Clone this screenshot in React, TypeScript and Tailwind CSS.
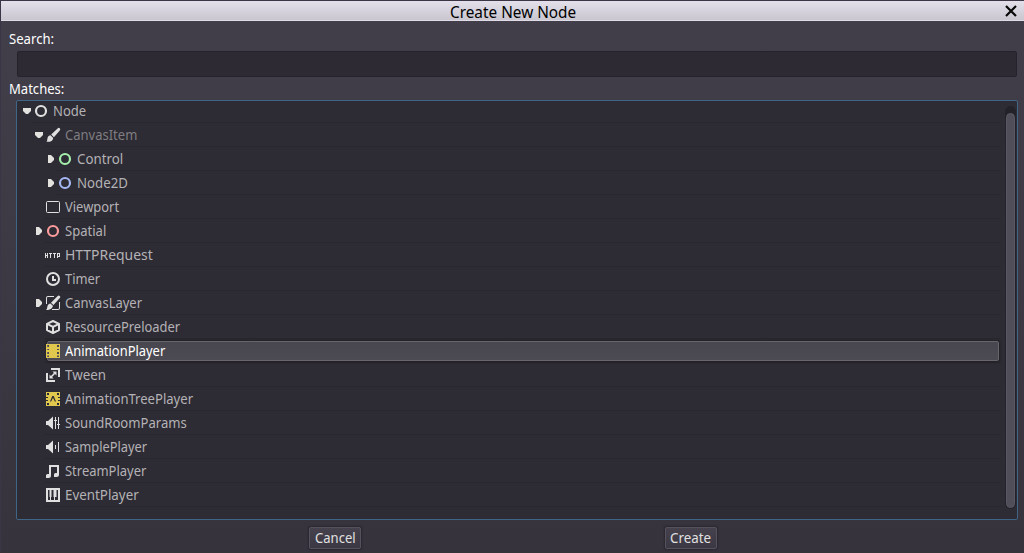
import React from "react";

type IconName =
  | "node" | "brush" | "viewport" | "http" | "timer" | "layer" | "box"
  | "film" | "tween" | "tree" | "room" | "sample" | "stream" | "piano";

type Item = {
  label: string;
  depth: 0 | 1 | 2;
  icon: IconName;
  color?: string;
  arrow?: "down" | "right";
  width: number;
  dim?: boolean;
  selected?: boolean;
};

const items: Item[] = [
  { label: "Node", depth: 0, icon: "node", arrow: "down", width: 33.5 },
  { label: "CanvasItem", depth: 1, icon: "brush", arrow: "down", dim: true, width: 72.5 },
  { label: "Control", depth: 2, icon: "node", color: "#a5efac", arrow: "right", width: 46.5 },
  { label: "Node2D", depth: 2, icon: "node", color: "#a5b7f3", arrow: "right", width: 51 },
  { label: "Viewport", depth: 1, icon: "viewport", width: 54.5 },
  { label: "Spatial", depth: 1, icon: "node", color: "#fc9c9c", arrow: "right", width: 41 },
  { label: "HTTPRequest", depth: 1, icon: "http", width: 87.5 },
  { label: "Timer", depth: 1, icon: "timer", width: 35 },
  { label: "CanvasLayer", depth: 1, icon: "layer", arrow: "right", width: 77 },
  { label: "ResourcePreloader", depth: 1, icon: "box", width: 115.5 },
  { label: "AnimationPlayer", depth: 1, icon: "film", selected: true, width: 100.5 },
  { label: "Tween", depth: 1, icon: "tween", width: 41 },
  { label: "AnimationTreePlayer", depth: 1, icon: "tree", width: 128 },
  { label: "SoundRoomParams", depth: 1, icon: "room", width: 121.5 },
  { label: "SamplePlayer", depth: 1, icon: "sample", width: 82.5 },
  { label: "StreamPlayer", depth: 1, icon: "stream", width: 81.5 },
  { label: "EventPlayer", depth: 1, icon: "piano", width: 73.5 },
];

/* One line of text, condensed horizontally to the given width. */
function Label({ text, width, className = "" }: { text: string; width: number; className?: string }) {
  const ref = React.useRef<HTMLSpanElement>(null);
  const [natural, setNatural] = React.useState(width);
  React.useLayoutEffect(() => {
    if (ref.current) setNatural(ref.current.offsetWidth);
  }, [text]);
  return (
    <span
      ref={ref}
      className={`inline-block origin-left whitespace-nowrap ${className}`}
      style={{ transform: `scaleX(${width / natural})`, marginRight: width - natural }}
    >
      {text}
    </span>
  );
}

function Icon({ name, color = "#e0e0e0" }: { name: IconName; color?: string }) {
  const shapes: Record<IconName, React.ReactNode> = {
    node: <circle cx="8" cy="8" r="5" fill="none" stroke={color} strokeWidth="2.2" />,
    brush: (
      <g fill={color}>
        <path d="M12.6 1.4a1.5 1.5 0 0 1 2.2 2.1L8.9 10.2 6.2 7.6z" />
        <path d="M5.5 8.3 8.2 10.9c-.2 3-3 4.2-6.8 3.8 1.2-.8.5-2.2 1.3-4.3.5-1.2 1.4-2 2.8-2.1z" />
      </g>
    ),
    viewport: <rect x="1.5" y="2.5" width="13" height="11" rx="1" fill="none" stroke={color} />,
    http: (
      <path
        fill={color}
        fillRule="evenodd"
        d="M0 6h1v2h1V6h1v5H2V9H1v2H0zM4 6h3v1H6v4H5V7H4zM8 6h3v1h-1v4H9V7H8zM12 6h3v4h-2v1h-1zM13 7v2h1V7z"
      />
    ),
    timer: (
      <g fill="none" stroke={color}>
        <circle cx="8" cy="8" r="6" strokeWidth="2" />
        <path d="M8 5v4h3" strokeWidth="2" />
      </g>
    ),
    layer: (
      <g fill={color}>
        <path d="M3 1h6v1H3a1 1 0 0 0-1 1v6H1V3a2 2 0 0 1 2-2zM14 7h1v6a2 2 0 0 1-2 2H7v-1h6a1 1 0 0 0 1-1z" />
        <path d="M12.7 1a1.4 1.4 0 0 1 2.1 2L8.5 10 6 7.7z" />
        <path d="M5.4 8.4 7.9 10.8c-.3 2.9-3.1 4.4-6.9 4.2 1.4-1 .9-2.5 1.7-4.5.5-1.2 1.4-2 2.7-2.1z" />
      </g>
    ),
    box: (
      <g fill="none" stroke={color} strokeWidth="2" strokeLinejoin="round">
        <path d="M8 2 14 4.8v6.3L8 14l-6-2.9V4.8z" />
        <path d="M2 4.8 8 7.8l6-3M8 7.8V14" />
      </g>
    ),
    film: (
      <path
        fill="#e0c84f"
        fillRule="evenodd"
        d="M1 1h14v14H1zM2 2v2h2V2zM2 6v1h2V6zM2 9v2h2V9zM2 12.5v1.5h2v-1.5zM12 2v2h2V2zM12 6v1h2V6zM12 9v2h2V9zM12 12.5v1.5h2v-1.5z"
      />
    ),
    tween: (
      <g fill={color}>
        <path d="M6 1h9v9h-2V3H6zM1 6h2v7h7v2H1z" />
        <path d="M7.5 4.5h4v4L10 7.1 7.1 10l1.4 1.5h-4v-4L5.9 8.9 8.9 5.9z" />
      </g>
    ),
    tree: (
      <path
        fill="#e0c84f"
        fillRule="evenodd"
        d="M1 1h14v14H1zM2 2v2h2V2zM1 6v1h2V6zM1 9v1h2V9zM2 12v2h2v-2zM12 2v2h2V2zM13 6v1h2V6zM13 9v1h2V9zM12 12v2h2v-2zM7.3 5 5 10.5h1.2L8 6.8l1.8 3.7H11L8.7 5z"
      />
    ),
    room: (
      <path
        fill={color}
        d="M1 6h2l5-4.5v13L3 10H1zM10 2h1v3h1v1h-1v8h-1V6H9V5h1zM13 2h1v7h1v1h-1v4h-1v-4h-1V9h1z"
      />
    ),
    sample: <path fill={color} d="M1 6h2l5-4.5v13L3 10H1zM10 6h1v4h-1zM13 3h1v10h-1z" />,
    stream: (
      <path
        fill={color}
        d="M4 2h10v9.5a2.5 2.5 0 0 1-2.5 2.5H9v-2.5A1.5 1.5 0 0 1 10.5 10H12V4H6v8.5A2.5 2.5 0 0 1 3.5 15H1v-2.5A1.5 1.5 0 0 1 2.5 11H4z"
      />
    ),
    piano: (
      <path
        fill={color}
        fillRule="evenodd"
        d="M1 1h14v14H1zM3 3v10h2v-3H4.5V3zM6.5 3v7H6v3h3v-3h-.5V3zM11.5 3v7H10v3h3V3z"
      />
    ),
  };
  return (
    <svg className="relative h-4 w-4 shrink-0" viewBox="0 0 16 16">
      {shapes[name]}
    </svg>
  );
}

function Arrow({ dir }: { dir?: "down" | "right" }) {
  return (
    <svg className="h-3 w-3 shrink-0" viewBox="0 0 12 12" fill="#e4e2df">
      {dir === "down" && <path d="M2 3h8v3L7 9H5L2 6z" />}
      {dir === "right" && <path d="M3 2h3l3 3v2l-3 3H3z" />}
    </svg>
  );
}

const indent = ["ml-1", "ml-4", "ml-7"];

function Row({ item }: { item: Item }) {
  const tone = item.selected ? "text-white" : item.dim ? "text-[#7f7d82]" : "text-[#b4b2b6]";
  return (
    <div className={`flex h-6 ${indent[item.depth]}`}>
      <div className="flex w-3 items-center">
        <Arrow dir={item.arrow} />
      </div>
      <div className="flex flex-1 items-center border-b border-[#29272b] pt-px">
        <Icon name={item.icon} color={item.color} />
        <div
          className={
            item.selected
              ? "-ml-[14px] mr-0.5 flex h-5 flex-1 items-center rounded-[2px] border border-[#68666b] bg-linear-to-b from-[#48464e] to-[#4c4a52] pl-[17px] shadow-[0_0_2px_1px_#222027]"
              : "flex flex-1 items-center pl-1"
          }
        >
          <Label text={item.label} width={item.width} className={tone} />
        </div>
      </div>
    </div>
  );
}

function Button({ text, width }: { text: string; width: number }) {
  return (
    <button className="flex h-[22px] w-[52px] items-center justify-center rounded-[2px] border border-[#55525d] bg-linear-to-b from-[#45424d] to-[#3b3843] text-[#e0e0e0] shadow-[0_0_2px_1px_#29272f]">
      <Label text={text} width={width} />
    </button>
  );
}

export default function App() {
  return (
    <div className="flex h-[553px] w-[1024px] flex-col overflow-hidden border-l border-t border-[#3c3545] bg-linear-to-b from-[#423f4a] to-[#36333d] font-['Noto_Sans',sans-serif] text-[14px] leading-5 text-white">
      <header className="flex h-5 shrink-0 items-center border-b border-[#dfdce7] bg-linear-to-b from-[#e3e0eb] to-[#c9c6d0] text-black">
        <div className="w-5" />
        <div className="flex flex-1 justify-center pt-[3px] text-[16px]">
          <Label text="Create New Node" width={126.5} />
        </div>
        <svg className="mr-[7px] h-3 w-3" viewBox="0 0 12 12" stroke="#080808" strokeWidth="2.2">
          <path d="M1 1l10 10M11 1L1 11" />
        </svg>
      </header>
      <main className="flex flex-1 flex-col">
        <div className="mt-2 h-5 pl-2">
          <Label text="Search:" width={45} />
        </div>
        <div className="ml-4 mt-0.5 h-[26px] w-[1000px] rounded-[2px] border border-[#24222a] bg-[#2d2a33]" />
        <div className="mt-[2px] h-5 pl-2">
          <Label text="Matches:" width={55} />
        </div>
        <section className="ml-[15px] mt-px flex h-[420px] w-[1002px] rounded-[2px] border border-[#3f6687] bg-[#2d2b33]">
          <div className="-mt-0.5 w-[984px]">
            {items.map((item) => (
              <Row key={item.label} item={item} />
            ))}
          </div>
          <div className="ml-1 mt-[5px] h-[403px] w-[11px] rounded-full border border-[#232129] bg-[#242229] pt-1.5">
            <div className="h-full w-[9px] rounded-full border border-[#5b5863] bg-[#504e58]" />
          </div>
        </section>
        <footer className="mt-[7px] flex pl-[308px]">
          <div className="w-[356px]">
            <Button text="Cancel" width={41} />
          </div>
          <Button text="Create" width={41} />
        </footer>
      </main>
    </div>
  );
}
